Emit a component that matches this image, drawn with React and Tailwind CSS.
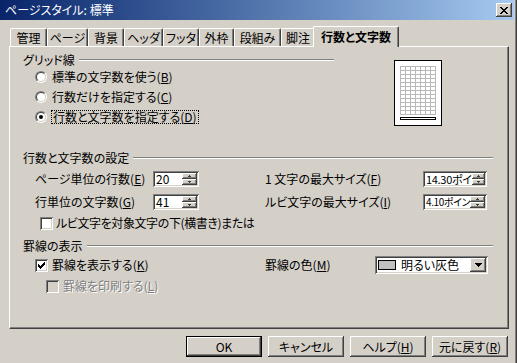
import React from 'react'

const sunken = 'shadow-[inset_1px_1px_#808080,inset_-1px_-1px_#ffffff,inset_2px_2px_#404040,inset_-2px_-2px_#d4d0c8]'
const raised = 'shadow-[inset_-1px_-1px_#404040,inset_1px_1px_#ffffff,inset_-2px_-2px_#808080]'

function M({ children }) {
  return <span className="underline underline-offset-[1px] decoration-1">{children}</span>
}

function GroupHeader({ title, className }) {
  return (
    <div className={`flex items-center h-[14px] ${className}`}>
      <span className="whitespace-nowrap">{title}</span>
      <div className="flex-1 ml-[4px] h-[2px] border-t border-t-[#808080] border-b border-b-white" />
    </div>
  )
}

function Radio({ checked }) {
  return (
    <span className="w-[12px] h-[12px] shrink-0 rounded-full border border-t-[#808080] border-l-[#808080] border-r-white border-b-white flex">
      <span className="flex-1 rounded-full border border-t-[#404040] border-l-[#404040] border-r-[#d4d0c8] border-b-[#d4d0c8] bg-white flex items-center justify-center">
        {checked && <span className="w-[4px] h-[4px] rounded-full bg-black" />}
      </span>
    </span>
  )
}

function Checkbox({ checked, disabled }) {
  return (
    <span className={`w-[13px] h-[13px] shrink-0 flex items-center justify-center ${sunken} ${disabled ? 'bg-[#d4d0c8]' : 'bg-white'}`}>
      {checked && (
        <svg width="9" height="9" viewBox="0 0 9 9" shapeRendering="crispEdges">
          <path d="M1 3h1v1h1v1h1V4h1V3h1V2h1V1h1v3H7v1H6v1H5v1H4v1H3V7H2V6H1z" fill="#000" />
        </svg>
      )}
    </span>
  )
}

function SpinBtn({ up }) {
  return (
    <div className={`flex-1 bg-[#d4d0c8] flex items-center justify-center ${raised}`}>
      <svg width="5" height="2" viewBox="0 0 5 2" shapeRendering="crispEdges">
        {up ? <path d="M1 1h3v1H1zM2 0h1v1H2z" fill="#404040" /> : <path d="M1 0h3v1H1zM2 1h1v1H2z" fill="#404040" />}
      </svg>
    </div>
  )
}

function Spin({ value, className, textClass = '' }) {
  return (
    <div className={`${className} h-[16px] bg-white flex p-[2px] ${sunken}`}>
      <span className={`flex-1 whitespace-nowrap leading-[12px] pl-[1px] ${textClass}`}>{value}</span>
      <div className="w-[15px] flex flex-col relative z-10">
        <SpinBtn up />
        <SpinBtn />
      </div>
    </div>
  )
}

function Tab({ label, className }) {
  return (
    <div className={`${className} h-[18px] flex items-center justify-center border-t border-l border-white border-r border-r-[#404040] rounded-t-[2px] shadow-[inset_-1px_0_#808080]`}>
      {label}
    </div>
  )
}

function Button({ children, def }) {
  return (
    <div className={`w-[76px] h-[21px] flex items-center justify-center ${def ? 'border border-black' : ''}`}>
      <div className={`w-full h-full flex items-center justify-center ${raised}`}>{children}</div>
    </div>
  )
}

function Preview() {
  const cols = Array.from({ length: 8 }, (_, i) => 6 + i * 5)
  const rows = Array.from({ length: 13 }, (_, j) => 6 + j * 4)
  return (
    <svg width="48" height="66" viewBox="0 0 48 66" shapeRendering="crispEdges">
      <rect x="0.5" y="0.5" width="47" height="65" fill="#fff" stroke="#000" />
      {cols.map((x) => (
        <line key={'c' + x} x1={x + 0.5} y1="6" x2={x + 0.5} y2="55" stroke="#b8b8b8" />
      ))}
      {rows.map((y) => (
        <line key={'r' + y} x1="6" y1={y + 0.5} x2="42" y2={y + 0.5} stroke="#b8b8b8" />
      ))}
      <rect x="6.5" y="57.5" width="35" height="2" fill="#fff" stroke="#000" />
    </svg>
  )
}

export default function App() {
  return (
    <div className="w-[517px] h-[363px] bg-[#d4d0c8] flex flex-col overflow-hidden text-black text-[12px] leading-[14px] font-['Noto_Sans_CJK_JP',sans-serif] [font-feature-settings:'palt'] shadow-[inset_-1px_0_#404040,inset_-2px_0_#808080]">
      {/* title bar */}
      <div className="h-[20px] mr-[3px] flex items-center bg-linear-to-r from-[#0a246a] to-[#a6caf0] pl-[5px]">
        <span className="text-white">ページスタイル: 標準</span>
        <div className={`ml-auto mr-[2px] w-[16px] h-[14px] bg-[#d4d0c8] flex items-center justify-center ${raised}`}>
          <svg width="8" height="7" viewBox="0 0 8 7" shapeRendering="crispEdges">
            <path d="M0 0h2v1h1v1h2V1h1V0h2v1H7v1H6v1H5v1h1v1h1v1h1v1H6V6H5V5H3v1H2v1H0V6h1V5h1V4h1V3H2V2H1V1H0z" fill="#000" />
          </svg>
        </div>
      </div>

      {/* tabs */}
      <div className="h-[26px] flex items-end pl-[10px]">
        <Tab label="管理" className="w-[37px]" />
        <Tab label="ページ" className="w-[41px]" />
        <Tab label="背景" className="w-[36px]" />
        <Tab label="ヘッダ" className="w-[39px]" />
        <Tab label="フッタ" className="w-[36px]" />
        <Tab label="外枠" className="w-[35px]" />
        <Tab label="段組み" className="w-[47px]" />
        <Tab label="脚注" className="w-[34px]" />
        <div className="w-[86px] h-[21px] -ml-[2px] translate-y-[1px] relative z-10 bg-[#d4d0c8] flex items-center justify-center font-bold border-t border-l border-white border-r border-r-[#404040] rounded-t-[2px] shadow-[inset_-1px_0_#808080] pb-[1px]">
          行数と文字数
        </div>
      </div>

      {/* panel */}
      <div className="ml-[9px] w-[500px] h-[283px] border-t border-l border-white border-r border-b border-r-[#404040] border-b-[#404040] shadow-[inset_-1px_-1px_#808080] pl-[13px] pt-[6px]">
        {/* grid lines */}
        <div className="flex">
          <div className="w-[311px]">
            <GroupHeader title="グリッド線" className="w-[311px]" />
            <div className="pl-[12px]">
              <div className="h-[20px] flex items-center gap-[5px]">
                <Radio />
                <span>標準の文字数を使う(<M>B</M>)</span>
              </div>
              <div className="h-[20px] flex items-center gap-[5px]">
                <Radio />
                <span>行数だけを指定する(<M>C</M>)</span>
              </div>
              <div className="h-[20px] flex items-center gap-[4px]">
                <Radio checked />
                <span className="border border-dotted border-black px-[1px] leading-[12px]">行数と文字数を指定する(<M>D</M>)</span>
              </div>
            </div>
          </div>
          <div className="ml-[60px] mt-[7px]">
            <Preview />
          </div>
        </div>

        {/* lines and chars */}
        <GroupHeader title="行数と文字数の設定" className="w-[470px] mt-[24px]" />
        <div className="mt-[6px] h-[16px] flex items-center pl-[12px]">
          <span className="w-[118px]">ページ単位の行数(<M>E</M>)</span>
          <Spin value="20" className="w-[46px]" />
          <span className="w-[158px] ml-[66px]">1 文字の最大サイズ(<M>F</M>)</span>
          <Spin value="14.30ポイ" className="w-[64px]" textClass="text-[11px] tracking-[-0.3px]" />
        </div>
        <div className="mt-[7px] h-[16px] flex items-center pl-[12px]">
          <span className="w-[118px]">行単位の文字数(<M>G</M>)</span>
          <Spin value="41" className="w-[46px]" />
          <span className="w-[158px] ml-[66px]">ルビ文字の最大サイズ(<M>I</M>)</span>
          <Spin value="4.10ポイン" className="w-[64px]" textClass="text-[10px] tracking-[-0.4px]" />
        </div>
        <div className="mt-[6px] h-[14px] flex items-center pl-[17px] gap-[3px]">
          <Checkbox />
          <span className="whitespace-nowrap tracking-[-0.4px]">ルビ文字を対象文字の下(横書き)または</span>
        </div>

        {/* ruled lines */}
        <GroupHeader title="罫線の表示" className="w-[470px] mt-[9px]" />
        <div className="mt-[3px] h-[18px] flex items-center pl-[12px]">
          <div className="w-[230px] flex items-center gap-[4px]">
            <Checkbox checked />
            <span>罫線を表示する(<M>K</M>)</span>
          </div>
          <span className="w-[110px]">罫線の色(<M>M</M>)</span>
          <div className={`w-[113px] h-[18px] bg-white flex items-center p-[2px] ${sunken}`}>
            <span className="ml-[1px] w-[18px] h-[10px] bg-[#c0c0c0] border border-black" />
            <span className="ml-[5px] flex-1">明るい灰色</span>
            <div className={`w-[16px] h-full bg-[#d4d0c8] flex items-center justify-center ${raised}`}>
              <svg width="7" height="4" viewBox="0 0 7 4" shapeRendering="crispEdges">
                <path d="M0 0h7v1H6v1H5v1H4v1H3V3H2V2H1V1H0z" fill="#000" />
              </svg>
            </div>
          </div>
        </div>
        <div className="mt-[3px] h-[18px] flex items-center pl-[23px] gap-[4px]">
          <Checkbox disabled />
          <span className="text-[#808080] [text-shadow:1px_1px_0_#ffffff]">罫線を印刷する(<M>L</M>)</span>
        </div>
      </div>

      {/* buttons */}
      <div className="mt-[7px] flex justify-end pr-[9px] gap-[6px]">
        <Button def>OK</Button>
        <Button>キャンセル</Button>
        <Button>ヘルプ(<M>H</M>)</Button>
        <Button>元に戻す(<M>R</M>)</Button>
      </div>
    </div>
  )
}
